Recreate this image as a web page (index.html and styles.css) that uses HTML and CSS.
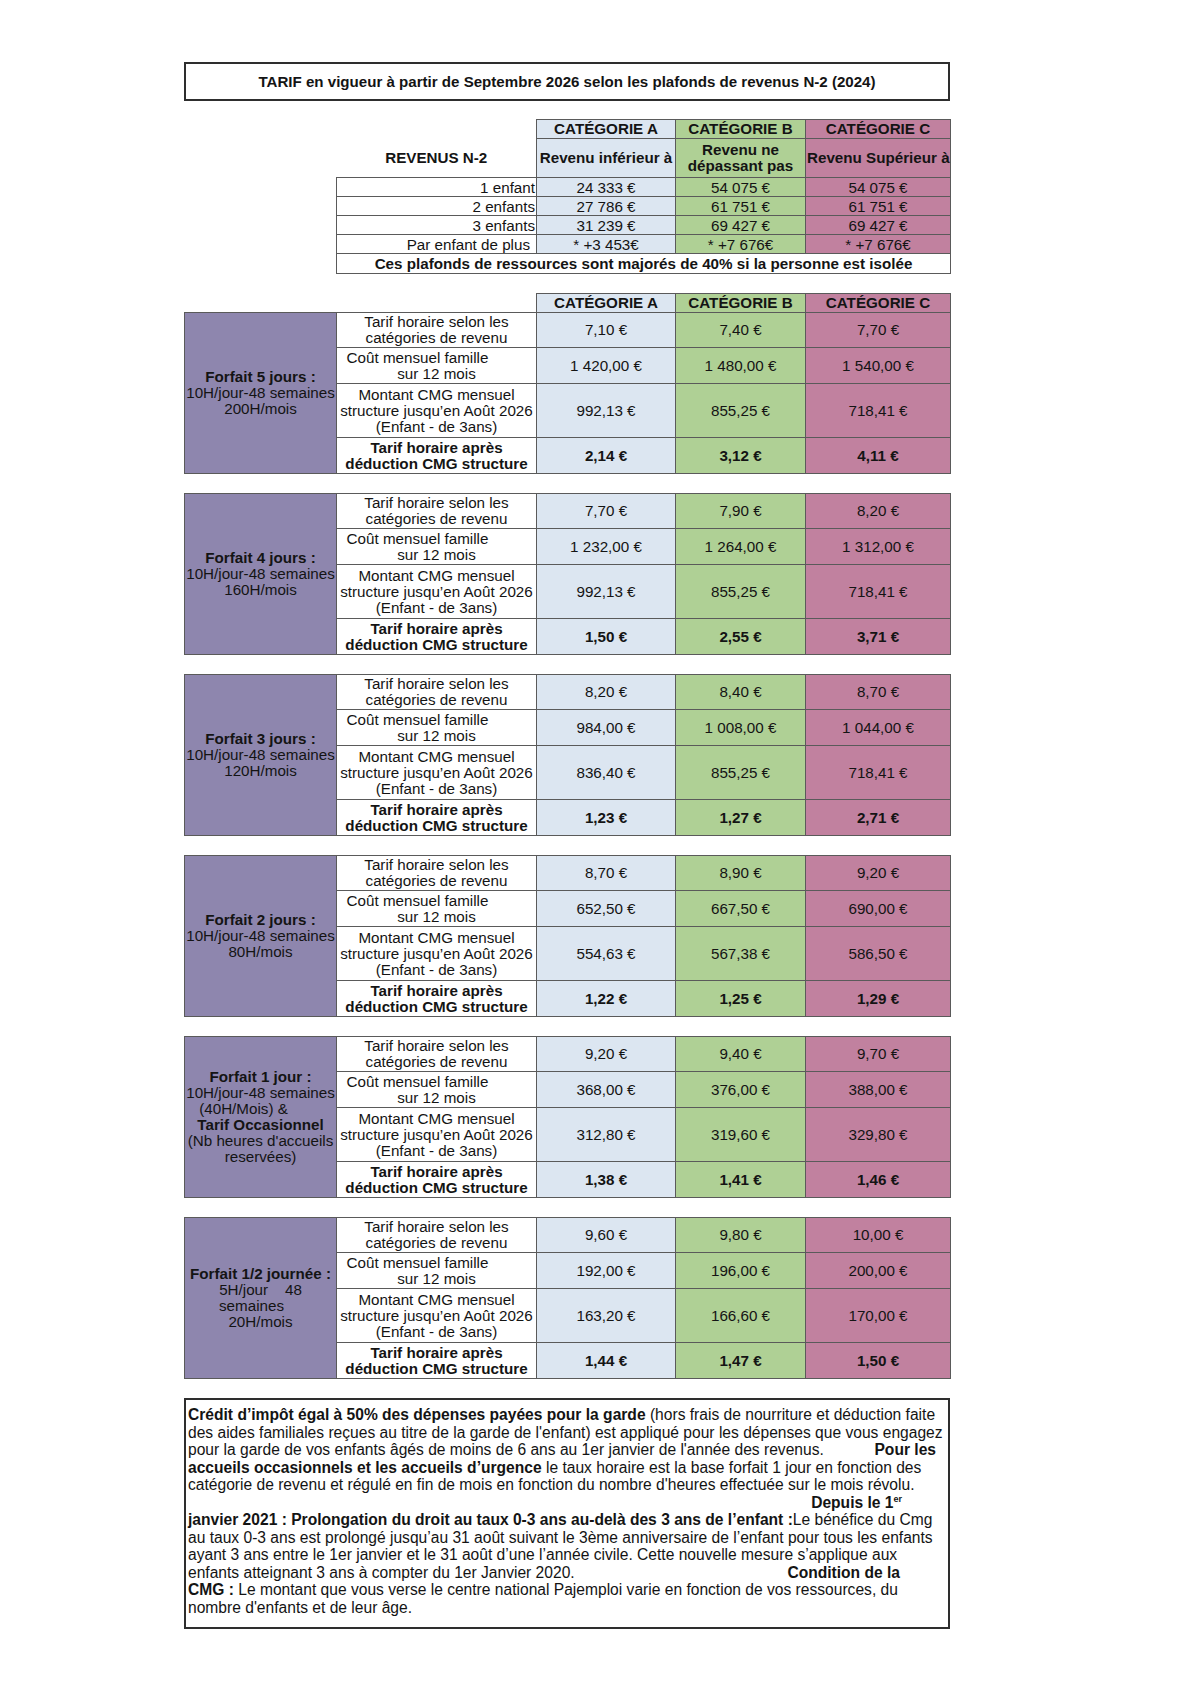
FILE: index.html
```html
<!DOCTYPE html>
<html lang="fr">
<head>
<meta charset="utf-8">
<title>Tarifs 2026</title>
<link rel="stylesheet" href="styles.css">
</head>
<body>
<div class="page">
  <div class="title">TARIF en vigueur à partir de Septembre 2026 selon les plafonds de revenus N-2 (2024)</div>

  <table class="rev">
    <colgroup><col class="w-desc"><col class="w-a"><col class="w-b"><col class="w-c"></colgroup>
    <tr class="r-h1"><td class="blank"></td><th class="a">CATÉGORIE A</th><th class="b">CATÉGORIE B</th><th class="c">CATÉGORIE C</th></tr>
    <tr class="r-h2"><td class="blank strong">REVENUS N-2</td><th class="a">Revenu inférieur à</th><th class="b">Revenu ne<br>dépassant pas</th><th class="c">Revenu Supérieur à</th></tr>
    <tr class="r-d"><td class="lbl">1 enfant</td><td class="a">24 333 €</td><td class="b">54 075 €</td><td class="c">54 075 €</td></tr>
    <tr class="r-d"><td class="lbl">2 enfants</td><td class="a">27 786 €</td><td class="b">61 751 €</td><td class="c">61 751 €</td></tr>
    <tr class="r-d"><td class="lbl">3 enfants</td><td class="a">31 239 €</td><td class="b">69 427 €</td><td class="c">69 427 €</td></tr>
    <tr class="r-d"><td class="lbl lbl-more">Par enfant de plus</td><td class="a">* +3 453€</td><td class="b">* +7 676€</td><td class="c">* +7 676€</td></tr>
    <tr class="r-n"><td colspan="4" class="note">Ces plafonds de ressources sont majorés de 40% si la personne est isolée</td></tr>
  </table>

  <table class="blk first">
    <colgroup><col class="w-lab"><col class="w-desc"><col class="w-a"><col class="w-b"><col class="w-c"></colgroup>
    <tr class="r-head"><td class="blank" colspan="2"></td><th class="a">CATÉGORIE A</th><th class="b">CATÉGORIE B</th><th class="c">CATÉGORIE C</th></tr>
    <tr class="r1"><td class="lab" rowspan="4"><b>Forfait 5 jours :</b><br>10H/jour-48 semaines<br>200H/mois</td><td class="desc">Tarif horaire selon les<br>catégories de revenu</td><td class="a">7,10 €</td><td class="b">7,40 €</td><td class="c">7,70 €</td></tr>
    <tr class="r2"><td class="desc"><span class="sh">Coût mensuel famille</span><br>sur 12 mois</td><td class="a">1 420,00 €</td><td class="b">1 480,00 €</td><td class="c">1 540,00 €</td></tr>
    <tr class="r3"><td class="desc">Montant CMG mensuel<br>structure jusqu’en Août 2026<br>(Enfant - de 3ans)</td><td class="a">992,13 €</td><td class="b">855,25 €</td><td class="c">718,41 €</td></tr>
    <tr class="r4 strong"><td class="desc">Tarif horaire après<br>déduction CMG structure</td><td class="a">2,14 €</td><td class="b">3,12 €</td><td class="c">4,11 €</td></tr>
  </table>

  <table class="blk">
    <colgroup><col class="w-lab"><col class="w-desc"><col class="w-a"><col class="w-b"><col class="w-c"></colgroup>
    <tr class="r1"><td class="lab" rowspan="4"><b>Forfait 4 jours :</b><br>10H/jour-48 semaines<br>160H/mois</td><td class="desc">Tarif horaire selon les<br>catégories de revenu</td><td class="a">7,70 €</td><td class="b">7,90 €</td><td class="c">8,20 €</td></tr>
    <tr class="r2"><td class="desc"><span class="sh">Coût mensuel famille</span><br>sur 12 mois</td><td class="a">1 232,00 €</td><td class="b">1 264,00 €</td><td class="c">1 312,00 €</td></tr>
    <tr class="r3"><td class="desc">Montant CMG mensuel<br>structure jusqu’en Août 2026<br>(Enfant - de 3ans)</td><td class="a">992,13 €</td><td class="b">855,25 €</td><td class="c">718,41 €</td></tr>
    <tr class="r4 strong"><td class="desc">Tarif horaire après<br>déduction CMG structure</td><td class="a">1,50 €</td><td class="b">2,55 €</td><td class="c">3,71 €</td></tr>
  </table>

  <table class="blk">
    <colgroup><col class="w-lab"><col class="w-desc"><col class="w-a"><col class="w-b"><col class="w-c"></colgroup>
    <tr class="r1"><td class="lab" rowspan="4"><b>Forfait 3 jours :</b><br>10H/jour-48 semaines<br>120H/mois</td><td class="desc">Tarif horaire selon les<br>catégories de revenu</td><td class="a">8,20 €</td><td class="b">8,40 €</td><td class="c">8,70 €</td></tr>
    <tr class="r2"><td class="desc"><span class="sh">Coût mensuel famille</span><br>sur 12 mois</td><td class="a">984,00 €</td><td class="b">1 008,00 €</td><td class="c">1 044,00 €</td></tr>
    <tr class="r3"><td class="desc">Montant CMG mensuel<br>structure jusqu’en Août 2026<br>(Enfant - de 3ans)</td><td class="a">836,40 €</td><td class="b">855,25 €</td><td class="c">718,41 €</td></tr>
    <tr class="r4 strong"><td class="desc">Tarif horaire après<br>déduction CMG structure</td><td class="a">1,23 €</td><td class="b">1,27 €</td><td class="c">2,71 €</td></tr>
  </table>

  <table class="blk">
    <colgroup><col class="w-lab"><col class="w-desc"><col class="w-a"><col class="w-b"><col class="w-c"></colgroup>
    <tr class="r1"><td class="lab" rowspan="4"><b>Forfait 2 jours :</b><br>10H/jour-48 semaines<br>80H/mois</td><td class="desc">Tarif horaire selon les<br>catégories de revenu</td><td class="a">8,70 €</td><td class="b">8,90 €</td><td class="c">9,20 €</td></tr>
    <tr class="r2"><td class="desc"><span class="sh">Coût mensuel famille</span><br>sur 12 mois</td><td class="a">652,50 €</td><td class="b">667,50 €</td><td class="c">690,00 €</td></tr>
    <tr class="r3"><td class="desc">Montant CMG mensuel<br>structure jusqu’en Août 2026<br>(Enfant - de 3ans)</td><td class="a">554,63 €</td><td class="b">567,38 €</td><td class="c">586,50 €</td></tr>
    <tr class="r4 strong"><td class="desc">Tarif horaire après<br>déduction CMG structure</td><td class="a">1,22 €</td><td class="b">1,25 €</td><td class="c">1,29 €</td></tr>
  </table>

  <table class="blk">
    <colgroup><col class="w-lab"><col class="w-desc"><col class="w-a"><col class="w-b"><col class="w-c"></colgroup>
    <tr class="r1"><td class="lab" rowspan="4"><b>Forfait 1 jour :</b><br>10H/jour-48 semaines<br><span class="sh2">(40H/Mois) &amp;</span><br><b>Tarif Occasionnel</b><br>(Nb heures d'accueils<br>reservées)</td><td class="desc">Tarif horaire selon les<br>catégories de revenu</td><td class="a">9,20 €</td><td class="b">9,40 €</td><td class="c">9,70 €</td></tr>
    <tr class="r2"><td class="desc"><span class="sh">Coût mensuel famille</span><br>sur 12 mois</td><td class="a">368,00 €</td><td class="b">376,00 €</td><td class="c">388,00 €</td></tr>
    <tr class="r3"><td class="desc">Montant CMG mensuel<br>structure jusqu’en Août 2026<br>(Enfant - de 3ans)</td><td class="a">312,80 €</td><td class="b">319,60 €</td><td class="c">329,80 €</td></tr>
    <tr class="r4 strong"><td class="desc">Tarif horaire après<br>déduction CMG structure</td><td class="a">1,38 €</td><td class="b">1,41 €</td><td class="c">1,46 €</td></tr>
  </table>

  <table class="blk">
    <colgroup><col class="w-lab"><col class="w-desc"><col class="w-a"><col class="w-b"><col class="w-c"></colgroup>
    <tr class="r1"><td class="lab" rowspan="4"><b>Forfait 1/2 journée :</b><br>5H/jour&nbsp;&nbsp;&nbsp; 48<br><span class="sh3">semaines</span><br>20H/mois</td><td class="desc">Tarif horaire selon les<br>catégories de revenu</td><td class="a">9,60 €</td><td class="b">9,80 €</td><td class="c">10,00 €</td></tr>
    <tr class="r2"><td class="desc"><span class="sh">Coût mensuel famille</span><br>sur 12 mois</td><td class="a">192,00 €</td><td class="b">196,00 €</td><td class="c">200,00 €</td></tr>
    <tr class="r3"><td class="desc">Montant CMG mensuel<br>structure jusqu’en Août 2026<br>(Enfant - de 3ans)</td><td class="a">163,20 €</td><td class="b">166,60 €</td><td class="c">170,00 €</td></tr>
    <tr class="r4 strong"><td class="desc">Tarif horaire après<br>déduction CMG structure</td><td class="a">1,44 €</td><td class="b">1,47 €</td><td class="c">1,50 €</td></tr>
  </table>

  <div class="info">
    <div class="ln"><b>Crédit d’impôt égal à 50% des dépenses payées pour la garde</b> (hors frais de nourriture et déduction faite</div>
    <div class="ln">des aides familiales reçues au titre de la garde de l'enfant) est appliqué pour les dépenses que vous engagez</div>
    <div class="ln split"><span>pour la garde de vos enfants âgés de moins de 6 ans au 1er janvier de l'année des revenus.</span><b class="end1">Pour les</b></div>
    <div class="ln"><b>accueils occasionnels et les accueils d’urgence</b> le taux horaire est la base forfait 1 jour en fonction des</div>
    <div class="ln">catégorie de revenu et régulé en fin de mois en fonction du nombre d'heures effectuée sur le mois révolu.</div>
    <div class="ln right"><b>Depuis le 1<sup>er</sup></b></div>
    <div class="ln"><b>janvier 2021 : Prolongation du droit au taux 0-3 ans au-delà des 3 ans de l’enfant :</b>Le bénéfice du Cmg</div>
    <div class="ln">au taux 0-3 ans est prolongé jusqu’au 31 août suivant le 3ème anniversaire de l’enfant pour tous les enfants</div>
    <div class="ln">ayant 3 ans entre le 1er janvier et le 31 août d’une l’année civile. Cette nouvelle mesure s’applique aux</div>
    <div class="ln split"><span>enfants atteignant 3 ans à compter du 1er Janvier 2020.</span><b class="end2">Condition de la</b></div>
    <div class="ln"><b>CMG :</b> Le montant que vous verse le centre national Pajemploi varie en fonction de vos ressources, du</div>
    <div class="ln">nombre d'enfants et de leur âge.</div>
  </div>
</div>
</body>
</html>
```

FILE: styles.css
```css
html, body {
  margin: 0;
  padding: 0;
  background: #ffffff;
}
body {
  font-family: "Liberation Sans", Arial, sans-serif;
  color: #141414;
  font-size: 15.2px;
}
.page {
  width: 766px;
  margin-left: 184px;
  padding-top: 62px;
  padding-bottom: 40px;
}
.title {
  box-sizing: border-box;
  height: 39px;
  border: 2px solid #2e2e2e;
  display: flex;
  align-items: center;
  justify-content: center;
  font-weight: bold;
  font-size: 15.1px;
}
table {
  border-collapse: collapse;
  table-layout: fixed;
}
td, th {
  border: 1px solid #5a5a5a;
  padding: 0 1px;
  text-align: center;
  vertical-align: middle;
  white-space: nowrap;
  line-height: 16px;
  font-size: 15.2px;
}
th { font-weight: bold; }
.strong td, td.strong { font-weight: bold; }
td.blank { border: none; background: transparent; }
.w-lab { width: 152px; }
.w-desc { width: 200px; }
.w-a { width: 139px; }
.w-b { width: 130px; }
.w-c { width: 145px; }
.a { background: #dce6f1; }
.b { background: #afd095; }
.c { background: #c1819f; }

.rev {
  margin-left: 152px;
  margin-top: 18px;
  width: 614px;
}
.rev .r-h1 { height: 19px; }
.rev .r-h2 { height: 39px; }
.rev .r-d { height: 19px; }
.rev .r-d td { line-height: 17px; }
.rev .r-n { height: 20px; }
.rev td.lbl { text-align: right; padding-right: 1px; }
.rev td.lbl-more { padding-right: 6px; }
.rev td.note { font-weight: bold; background: #ffffff; }

.blk {
  width: 766px;
  margin-top: 19px;
}
.blk.first { margin-top: 19px; }
.blk .r-head { height: 19px; }
.blk .r1 { height: 35px; }
.blk .r2 { height: 36px; }
.blk .r3 { height: 54px; }
.blk .r4 { height: 36px; }
.blk td.lab {
  background: #8e86ae;
  white-space: nowrap;
  padding: 0;
}
.blk td.desc { background: #ffffff; padding: 0; }
.sh { padding-right: 38px; }
.sh2 { padding-right: 34px; }
.sh3 { padding-right: 18px; }

.info {
  box-sizing: border-box;
  margin-top: 19px;
  height: 231px;
  border: 2px solid #2e2e2e;
  padding: 6px 2px 0 2px;
  font-size: 15.6px;
  line-height: 17.5px;
}
.ln { white-space: nowrap; }
.split { display: flex; justify-content: space-between; }
.end1 { margin-right: 10px; }
.end2 { margin-right: 46px; }
.right { text-align: right; padding-right: 44px; }
sup { font-size: 9px; line-height: 0; vertical-align: 6px; }
```
